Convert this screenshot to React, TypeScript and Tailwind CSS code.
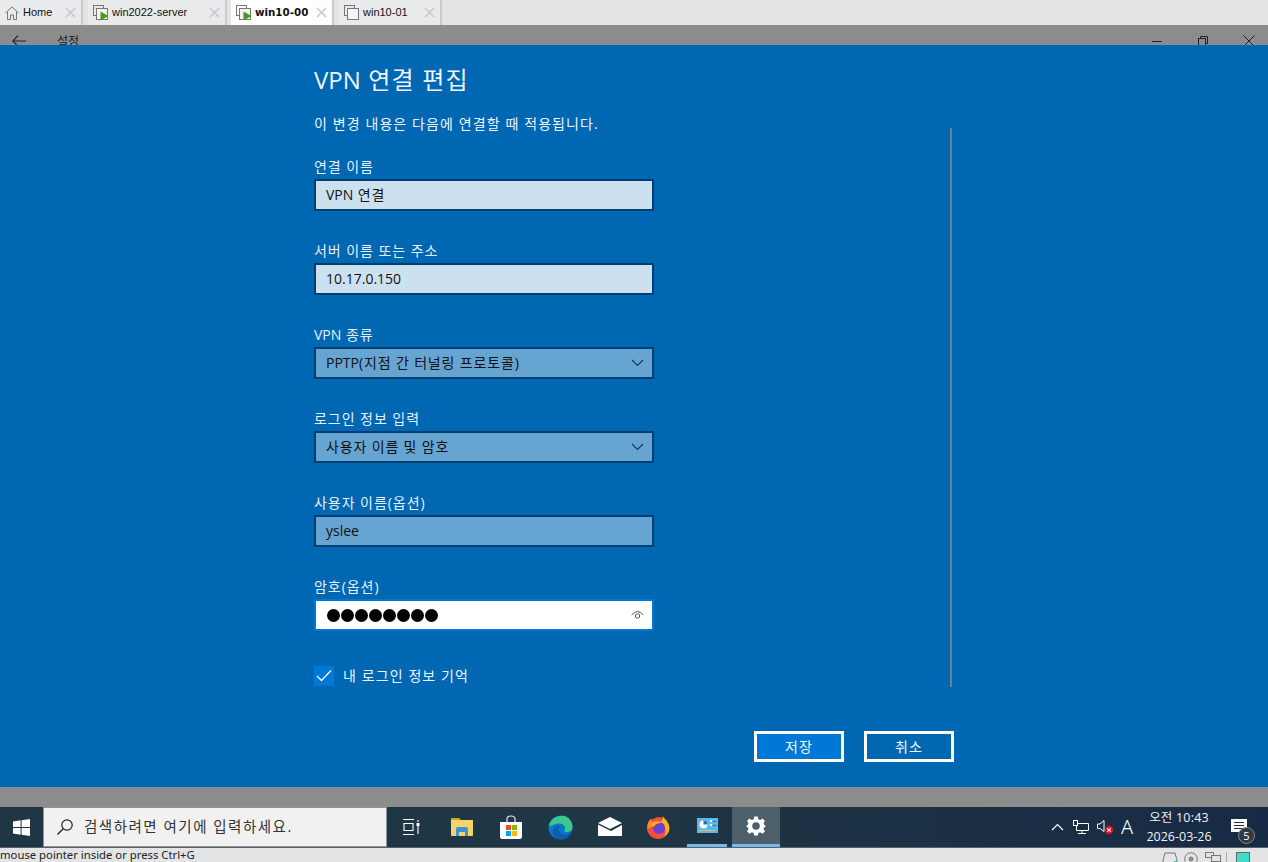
import React from "react";

const KR = "font-['Open_Sans','Noto_Sans_CJK_KR',sans-serif]";

function VmIcon({ on }: { on: boolean }) {
  return (
    <svg width="16" height="17" viewBox="0 0 16 17" className="shrink-0">
      <rect x="0.5" y="1.5" width="10" height="10" fill="none" stroke="#777" />
      <rect x="3.5" y="4.5" width="11" height="11" fill="#f4f4f4" stroke="#777" />
      {on && <path d="M7.5 7.5 L15.5 12 L7.5 16.5 Z" fill="#4a9a10" />}
    </svg>
  );
}

function TabClose() {
  return (
    <svg width="11" height="11" viewBox="0 0 11 11" className="shrink-0">
      <path d="M1 1 L10 10 M10 1 L1 10" stroke="#c8cacc" strokeWidth="1.7" />
    </svg>
  );
}

function Tab({ w, label, active, on }: { w: string; label: string; active?: boolean; on?: boolean }) {
  return (
    <div className={`${w} h-full flex items-center pl-[5px] pr-[5px] border-r-2 border-[#c8cacc] ${active ? "bg-white" : "bg-[#e9eaec]"}`}>
      <VmIcon on={!!on} />
      <span
        className={`ml-[3px] flex-1 text-[#111] ${active ? "font-['DejaVu_Sans',sans-serif] font-bold text-[10.3px]" : "font-['Liberation_Sans',sans-serif] text-[11px]"}`}
      >
        {label}
      </span>
      <TabClose />
    </div>
  );
}

function Field({ label, value, tone, chevron }: { label: React.ReactNode; value: React.ReactNode; tone: string; chevron?: boolean }) {
  return (
    <div className="mt-[30px]">
      <div className="text-[14px] leading-[20px] text-[#e6f0f8] tracking-[0.95px]">{label}</div>
      <div className={`mt-[2px] w-[340px] h-[32px] border-[2px] border-[#004070] ${tone} flex items-center pl-[10px] pr-[8px] pb-px text-[14px] text-[#111] tracking-[0.85px]`}>
        <span className="flex-1">{value}</span>
        {chevron && (
          <svg width="13" height="8" viewBox="0 0 13 8">
            <path d="M1 1 L6.5 6.5 L12 1" fill="none" stroke="#1b3550" strokeWidth="1.1" />
          </svg>
        )}
      </div>
    </div>
  );
}

function Latin({ children }: { children: React.ReactNode }) {
  return <span className="tracking-normal">{children}</span>;
}

function Taskbar() {
  return (
    <div className="h-[41px] flex items-stretch bg-gradient-to-r from-[#1f3644] via-[#1f3644] to-[#172a45] border-b border-[#5c6066]">
      <div className="w-[43px] flex items-center justify-center">
        <svg width="17" height="17" viewBox="0 0 17 17">
          <path d="M0 2.4 L7.6 1.3 V8 H0 Z M8.6 1.2 L17 0 V8 H8.6 Z M0 9 H7.6 V15.7 L0 14.6 Z M8.6 9 H17 V17 L8.6 15.8 Z" fill="#fff" />
        </svg>
      </div>
      <div className="w-[344px] bg-[#f1f1f1] border border-[#8d9398] flex items-center pl-[12px]">
        <svg width="18" height="18" viewBox="0 0 18 18" className="shrink-0">
          <circle cx="11" cy="7" r="5.2" fill="none" stroke="#222" strokeWidth="1.2" />
          <path d="M7.2 10.8 L1.5 16.5" stroke="#222" strokeWidth="1.3" />
        </svg>
        <span className="ml-[10px] text-[14.5px] text-[#333] tracking-[1.5px]">검색하려면 여기에 입력하세요.</span>
      </div>
      <div className="flex items-stretch">
        <div className="w-[48px] mr-[3px] flex items-center justify-center">
          <svg width="17" height="16" viewBox="0 0 17 16" fill="none" stroke="#fff" strokeWidth="1.1">
            <path d="M0 .5 H11 M0 15.5 H11 M1 4.5 H10 V11.5 H1 Z" />
            <path d="M15 1 V3 M15 7 V15" />
            <rect x="13.5" y="4" width="3" height="3" fill="#fff" stroke="none" />
          </svg>
        </div>
        <div className="w-[48px] flex items-center justify-center">
          <svg width="22" height="18" viewBox="0 0 22 18">
            <path d="M0 1 Q0 0 1 0 H8 L10 2 H0 Z" fill="#d9a020" />
            <path d="M0 2 H22 V17 Q22 18 21 18 H1 Q0 18 0 17 Z" fill="#f6d467" />
            <path d="M5 11 Q5 9 7 9 H15 Q17 9 17 11 V18 H14 V14 H8 V18 H5 Z" fill="#3d93d6" />
          </svg>
        </div>
        <div className="w-[49px] flex items-center justify-center">
          <svg width="24" height="24" viewBox="0 0 24 24">
            <path d="M8 7 V4 Q8 1 12 1 Q16 1 16 4 V7" fill="none" stroke="#e8e8e8" strokeWidth="1.2" />
            <path d="M1 7 H23 V22 Q23 24 21 24 H3 Q1 24 1 22 Z" fill="#fff" />
            <rect x="7" y="10" width="5" height="5" fill="#f25022" />
            <rect x="13" y="10" width="5" height="5" fill="#7fba00" />
            <rect x="7" y="16" width="5" height="5" fill="#00a4ef" />
            <rect x="13" y="16" width="5" height="5" fill="#ffb900" />
          </svg>
        </div>
        <div className="w-[50px] flex items-center justify-center">
          <svg width="25" height="25" viewBox="0 0 25 25">
            <circle cx="12.5" cy="12.5" r="12" fill="#0c76c9" />
            <path d="M1 11 C3 2 12 0 17 1 C22 3 25 8 24.5 13 C24 17 18 18 16 16 C19 13 16 8 11 8.5 C6 9 3 11 1 11 Z" fill="#3cc88c" />
            <path d="M24 15 C23 21 17 25 12 24.5 C7 24 4 20 5 15 C6 11 10 10 12 11 C10 13 10 18 15 19 C19 20 22 18 24 15 Z" fill="#0b5fb0" />
          </svg>
        </div>
        <div className="w-[49px] flex items-center justify-center">
          <svg width="24" height="20" viewBox="0 0 24 20">
            <path d="M0 6 L12 0 L24 6 L12 12 Z" fill="#fff" />
            <path d="M0 7.5 L13 14 L24 8 V19 H0 Z" fill="#fff" />
          </svg>
        </div>
        <div className="w-[48px] flex items-center justify-center">
          <svg width="24" height="24" viewBox="0 0 24 24">
            <path d="M12 2 C18 2 23 7 23 13 C23 19 18 24 12 24 C6 24 1 19 1 13 C1 10 2 7 4 5 Z" fill="#f2503c" />
            <path d="M16 0 C17 3 23 6 23.5 13 C23.5 17 21 20 18 22 C21 17 20 10 15 7 C17 5 17 2 16 0 Z" fill="#ffb020" />
            <path d="M1.5 14 C1 9 3 5 5 4 L6 7 C8 6 10 6 12 7 L8 11 Z" fill="#ff8a20" />
            <circle cx="13" cy="13" r="6" fill="#6f3fd0" />
            <path d="M5 9 C8 6 13 6 16 8 C12 8 9 9 8 12 Z" fill="#ffb020" />
          </svg>
        </div>
        <div className="w-[40px] ml-[5px] flex items-center justify-center border-b-[3px] border-[#76b9ed]">
          <svg width="21" height="15" viewBox="0 0 21 15">
            <rect width="21" height="15" fill="#5cb8ec" />
            <circle cx="6.5" cy="6.5" r="4" fill="#fff" />
            <path d="M6.5 6.5 V2.5 A4 4 0 0 1 10.5 6.5 Z" fill="#2274b0" />
            <rect x="13" y="2" width="2" height="2" fill="#fff" />
            <rect x="16" y="3" width="3" height="1" fill="#1c6ba5" />
            <rect x="13" y="6" width="2" height="2" fill="#fff" />
            <rect x="16" y="7" width="3" height="1" fill="#1c6ba5" />
            <rect x="2" y="12" width="16" height="1" fill="#e0c060" />
          </svg>
        </div>
        <div className="w-[48px] ml-[5px] flex items-center justify-center bg-[#4e5f6c] border-b-[3px] border-[#76b9ed]">
          <svg width="20" height="20" viewBox="0 0 20 20">
            <path d="M8.2 0.5 H11.8 L12.3 3.2 L14.2 4 L16.5 2.5 L19 5 L17.5 7.3 L18.3 9 L19.5 9.5 V11 L18.3 11.3 L17.5 13 L19 15.2 L16.5 17.7 L14.2 16.2 L12.3 17 L11.8 19.5 H8.2 L7.7 17 L5.8 16.2 L3.5 17.7 L1 15.2 L2.5 13 L1.7 11.3 L0.5 11 V9.5 L1.7 9 L2.5 7.3 L1 5 L3.5 2.5 L5.8 4 L7.7 3.2 Z" fill="#fff" />
            <circle cx="10" cy="10" r="3.8" fill="#4e5f6c" />
          </svg>
        </div>
      </div>
      <div className="flex-1" />
      <div className="flex items-stretch text-white">
        <div className="flex items-center mr-[9px] -ml-[5px]">
          <svg width="13" height="8" viewBox="0 0 13 8">
            <path d="M1 7 L6.5 1.5 L12 7" fill="none" stroke="#fff" strokeWidth="1.2" />
          </svg>
        </div>
        <div className="flex items-center w-[24px]">
          <svg width="16" height="15" viewBox="0 0 16 15" fill="none" stroke="#fff">
            <path d="M3.5 3.5 H15.5 V10.5 H3.5 Z M9 11 V13.5 M5 13.5 H13" />
            <rect x="0.5" y="0.5" width="4" height="5" fill="#1b2f45" />
          </svg>
        </div>
        <div className="flex items-center w-[19px]">
          <svg width="17" height="16" viewBox="0 0 17 16">
            <path d="M0.5 5 H3 L7 1.5 V12.5 L3 9.5 H0.5 Z" fill="none" stroke="#fff" />
            <circle cx="12" cy="11" r="4.2" fill="#e81123" />
            <path d="M10.3 9.3 L13.7 12.7 M13.7 9.3 L10.3 12.7" stroke="#fff" strokeWidth="1.1" />
          </svg>
        </div>
        <div className="flex items-center justify-center w-[22px] text-[20px] font-['Noto_Sans',sans-serif] font-light">A</div>
        <div className="w-[82px] flex flex-col items-center justify-center text-[12.5px] leading-[19px] text-[#f2f4f6]">
          <span className="tracking-[0.2px]">오전 10:43</span>
          <span>2026-03-26</span>
        </div>
        <div className="w-[48px] relative">
          <svg width="16" height="14" viewBox="0 0 16 14" className="absolute left-[11px] top-[12px]">
            <path d="M0 0 H16 V13 H0 Z" fill="#fff" />
            <path d="M3 3.5 H13 M3 6.5 H13 M3 9.5 H13" stroke="#1b2f45" />
          </svg>
          <div className="absolute left-[18px] top-[20px] w-[17px] h-[17px] rounded-full bg-[#333a44] border border-[#888] text-[11px] leading-[15px] text-center text-white">5</div>
        </div>
      </div>
    </div>
  );
}

function StatusBar() {
  return (
    <div className="h-[14px] bg-[#e3e4e6] flex items-start overflow-hidden font-['Noto_Sans',sans-serif] text-[11.3px] text-[#222]">
      <span className="leading-[14px] whitespace-nowrap">mouse pointer inside or press Ctrl+G</span>
      <div className="flex-1" />
      <div className="flex items-start pr-[18px] pt-[4px]">
        <svg width="16" height="12" viewBox="0 0 16 12" fill="none" stroke="#777" className="mr-[6px]">
          <path d="M3 1 H13 L15 8 V13 H1 V8 Z" />
          <rect x="12" y="9" width="3" height="3" fill="#35c0a0" stroke="none" />
        </svg>
        <svg width="14" height="14" viewBox="0 0 14 14" fill="none" stroke="#777" className="mr-[7px]">
          <circle cx="7" cy="7" r="6.3" />
          <circle cx="7" cy="7" r="2" fill="#999" />
        </svg>
        <svg width="16" height="13" viewBox="0 0 16 13" fill="none" stroke="#777" className="mr-[5px]">
          <rect x="0.5" y="0.5" width="8" height="5" />
          <rect x="6.5" y="3.5" width="9" height="6" fill="#e3e4e6" />
        </svg>
        <div className="w-px h-[11px] bg-[#aaa] mr-[9px]" />
        <div className="w-[14px] h-[12px] bg-[#3fdcc8] border border-[#666]" />
      </div>
    </div>
  );
}

export default function App() {
  return (
    <div className={`w-[1268px] h-[862px] overflow-hidden flex flex-col ${KR}`}>
      <div className="h-[25px] flex items-stretch bg-[#e3e4e6]">
        <div className="w-[83px] h-full flex items-center pl-[5px] pr-[5px] border-r-2 border-[#c8cacc] bg-[#e9eaec] mr-[5px]">
          <svg width="14" height="14" viewBox="0 0 14 14" fill="none" stroke="#777" className="shrink-0">
            <path d="M0.5 7 L7 0.8 L13.5 7 M2.5 6 V13.5 H5.5 V9 H8.5 V13.5 H11.5 V6" />
          </svg>
          <span className="ml-[4px] flex-1 text-[11px] text-[#111] font-['Liberation_Sans',sans-serif]">Home</span>
          <TabClose />
        </div>
        <Tab w="w-[139px] mr-[4px]" label="win2022-server" on />
        <Tab w="w-[103px] mr-[5px]" label="win10-00" on active />
        <Tab w="w-[103px]" label="win10-01" />
      </div>

      <div className="h-[20px] bg-[#8c8c8c] flex items-start relative overflow-hidden">
        <svg width="14" height="12" viewBox="0 0 14 12" className="ml-[12px] mt-[10px] shrink-0">
          <path d="M6 0.7 L0.8 6 L6 11.3 M0.8 6 H14" fill="none" stroke="#222" strokeWidth="1.1" />
        </svg>
        <span className="ml-[31px] mt-[9px] text-[12px] leading-[16px] text-[#222]">설정</span>
        <div className="flex-1" />
        <div className="w-[10px] h-px bg-[#222] mt-[16px] mr-[36px]" />
        <svg width="10" height="10" viewBox="0 0 10 10" className="mt-[11px] mr-[35px]" fill="none" stroke="#222">
          <rect x="0.5" y="2.5" width="7" height="7" />
          <path d="M2.5 2.5 V0.5 H9.5 V7.5 H7.5" />
        </svg>
        <svg width="12" height="12" viewBox="0 0 12 12" className="mt-[10px] mr-[13px]" fill="none" stroke="#222">
          <path d="M0.5 0.5 L11.5 11.5 M11.5 0.5 L0.5 11.5" />
        </svg>
      </div>

      <div className="h-[742px] bg-[#0067b3] flex flex-col text-white pl-[314px]">
        <div className="text-[24px] leading-[32px] mt-[19px] text-[#f0f6fb] tracking-[1.2px]">
          <Latin>VPN</Latin> 연결 편집
        </div>
        <div className="flex items-start flex-1">
          <div className="w-[636px] shrink-0">
            <div className="text-[14px] leading-[20px] mt-[18px] text-[#eef5fa] tracking-[1.1px]">이 변경 내용은 다음에 연결할 때 적용됩니다.</div>
            <div className="-mt-[7px]">
              <Field label="연결 이름" value={<><Latin>VPN</Latin> 연결</>} tone="bg-[#cce1f0]" />
              <Field label="서버 이름 또는 주소" value={<Latin>10.17.0.150</Latin>} tone="bg-[#cce1f0]" />
              <Field label={<><Latin>VPN</Latin> 종류</>} value={<><Latin>PPTP</Latin>(지점 간 터널링 프로토콜)</>} tone="bg-[#66a4d1]" chevron />
              <Field label="로그인 정보 입력" value="사용자 이름 및 암호" tone="bg-[#66a4d1]" chevron />
              <Field label="사용자 이름(옵션)" value={<Latin>yslee</Latin>} tone="bg-[#66a4d1]" />
            </div>
            <div className="mt-[30px]">
              <div className="text-[14px] leading-[20px] text-[#e6f0f8] tracking-[0.95px]">암호(옵션)</div>
              <div className="mt-[2px] w-[340px] h-[32px] border-[2px] border-[#0078d7] bg-white flex items-center pl-[11px] pr-[8px]">
                <div className="flex-1 flex gap-[1px]">
                  {[0, 1, 2, 3, 4, 5, 6, 7].map((i) => (
                    <span key={i} className="w-[13px] h-[13px] rounded-full bg-black" />
                  ))}
                </div>
                <svg width="13" height="10" viewBox="0 0 13 10" fill="none" stroke="#555">
                  <path d="M0.7 5 Q6.5 -2 12.3 5" />
                  <circle cx="6.5" cy="6" r="2.2" />
                </svg>
              </div>
            </div>
            <div className="mt-[34px] flex items-center">
              <div className="w-[20px] h-[20px] bg-[#0078d7] flex items-center justify-center">
                <svg width="16" height="13" viewBox="0 0 16 13">
                  <path d="M1 7 L5.5 11.5 L15 1.5" fill="none" stroke="#fff" strokeWidth="1.3" />
                </svg>
              </div>
              <span className="ml-[9px] text-[14px] text-[#eef5fa] tracking-[1.1px]">내 로그인 정보 기억</span>
            </div>
            <div className="mt-[45px] ml-[440px] w-[200px] flex gap-[20px]">
              <button className="w-[90px] shrink-0 h-[31px] border-[3px] border-white bg-[#0078d7] text-[14px] text-[#f2f8fc] tracking-[1px]">저장</button>
              <button className="w-[90px] shrink-0 h-[31px] border-[3px] border-white text-[14px] text-[#f2f8fc] tracking-[1px]">취소</button>
            </div>
          </div>
          <div className="w-[2px] h-[559px] bg-[#737d87] mt-[32px]" />
        </div>
      </div>

      <div className="h-[20px] bg-[#8c8c8c]" />
      <Taskbar />
      <StatusBar />
    </div>
  );
}
